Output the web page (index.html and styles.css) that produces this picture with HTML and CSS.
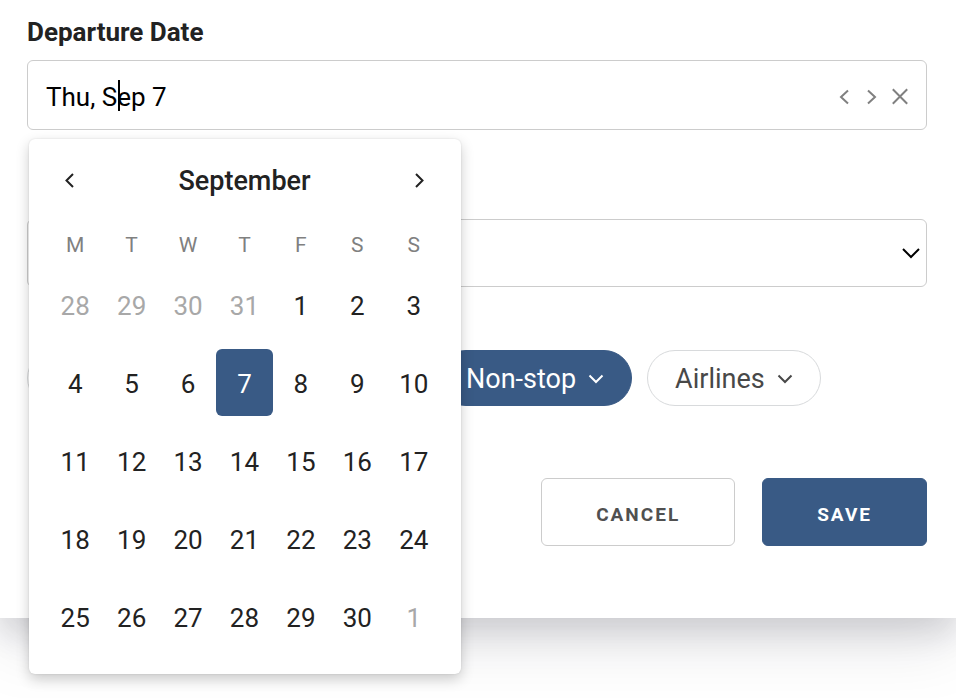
FILE: index.html
```html
<!DOCTYPE html>
<html lang="en">
<head>
<meta charset="utf-8">
<meta name="viewport" content="width=device-width, initial-scale=1">
<title>Departure Date</title>
<link rel="stylesheet" href="styles.css">
</head>
<body>
<form class="card">
  <div class="field">
    <label class="label" for="date">Departure Date</label>
    <div class="control">
      <input class="input" id="date" type="text" value="Thu, Sep 7">
      <span class="caret"></span>
      <div class="tools">
        <button class="tool" type="button" aria-label="Previous day"><svg width="18" height="18" viewBox="0 0 18 18"><path d="M13 2.500 6 9l7 6.500"/></svg></button>
        <button class="tool" type="button" aria-label="Next day"><svg width="18" height="18" viewBox="0 0 18 18"><path d="M5 2.500 12 9l-7 6.500"/></svg></button>
        <button class="tool" type="button" aria-label="Clear"><svg width="18" height="18" viewBox="0 0 18 18"><path d="m1.800 1.300 14.400 14.400M16.200 1.300 1.800 15.700"/></svg></button>
      </div>
      <div class="calendar">
        <div class="month">
          <button class="step" type="button" aria-label="Previous month"><svg width="18" height="18" viewBox="0 0 18 18"><path d="M12 2 5.500 8.500 12 15"/></svg></button>
          <span class="month-name">September</span>
          <button class="step" type="button" aria-label="Next month"><svg width="18" height="18" viewBox="0 0 18 18"><path d="m6 2 6.500 6.500L6 15"/></svg></button>
        </div>
        <table class="days">
          <thead>
            <tr><th>M</th><th>T</th><th>W</th><th>T</th><th>F</th><th>S</th><th>S</th></tr>
          </thead>
          <tbody>
            <tr><td><button type="button" class="day other">28</button></td><td><button type="button" class="day other">29</button></td><td><button type="button" class="day other">30</button></td><td><button type="button" class="day other">31</button></td><td><button type="button" class="day">1</button></td><td><button type="button" class="day">2</button></td><td><button type="button" class="day">3</button></td></tr>
            <tr><td><button type="button" class="day">4</button></td><td><button type="button" class="day">5</button></td><td><button type="button" class="day">6</button></td><td><button type="button" class="day selected">7</button></td><td><button type="button" class="day">8</button></td><td><button type="button" class="day">9</button></td><td><button type="button" class="day">10</button></td></tr>
            <tr><td><button type="button" class="day">11</button></td><td><button type="button" class="day">12</button></td><td><button type="button" class="day">13</button></td><td><button type="button" class="day">14</button></td><td><button type="button" class="day">15</button></td><td><button type="button" class="day">16</button></td><td><button type="button" class="day">17</button></td></tr>
            <tr><td><button type="button" class="day">18</button></td><td><button type="button" class="day">19</button></td><td><button type="button" class="day">20</button></td><td><button type="button" class="day">21</button></td><td><button type="button" class="day">22</button></td><td><button type="button" class="day">23</button></td><td><button type="button" class="day">24</button></td></tr>
            <tr><td><button type="button" class="day">25</button></td><td><button type="button" class="day">26</button></td><td><button type="button" class="day">27</button></td><td><button type="button" class="day">28</button></td><td><button type="button" class="day">29</button></td><td><button type="button" class="day">30</button></td><td><button type="button" class="day other">1</button></td></tr>
          </tbody>
        </table>
      </div>
    </div>
  </div>

  <div class="field">
    <div class="select-box">
      <select class="select" aria-label="Time"><option></option></select>
      <svg class="select-arrow" width="20" height="12" viewBox="0 0 20 12"><path d="m2 2 8 8 8-8"/></svg>
    </div>
  </div>

  <div class="chips">
    <button class="chip chip-wide" type="button" aria-label="Filters"></button>
    <button class="chip chip-on" type="button">Non-stop <svg width="16" height="12" viewBox="0 0 16 12"><path d="m1.500 2.500 6.500 6.500 6.500-6.500"/></svg></button>
    <button class="chip" type="button">Airlines <svg width="16" height="12" viewBox="0 0 16 12"><path d="m1.500 2.500 6.500 6.500 6.500-6.500"/></svg></button>
  </div>

  <div class="actions">
    <button class="action" type="button">CANCEL</button>
    <button class="action action-main" type="submit">SAVE</button>
  </div>
</form>
</body>
</html>
```

FILE: styles.css
```css
* {
  box-sizing: border-box;
}

body {
  margin: 0;
  padding-bottom: 80px;
  background: #fff;
  color: #222;
  font-family: Roboto, "Liberation Sans", sans-serif;
  font-size: 26px;
}

button,
input,
select {
  margin: 0;
  font: inherit;
  color: inherit;
}

button {
  padding: 0;
  border: 0;
  background: none;
}

svg {
  display: block;
  fill: none;
  stroke: currentColor;
  stroke-width: 2;
}

.card {
  padding: 14px 29px 72px 27px;
  background: #fff;
  box-shadow: 0 14px 30px rgba(20, 20, 40, 0.14), 0 28px 60px rgba(20, 20, 40, 0.1);
}

.label {
  display: block;
  margin-bottom: 10px;
  line-height: 36px;
  font-weight: 700;
}

.control {
  position: relative;
  display: flex;
  align-items: center;
  height: 70px;
  padding: 0 17px 0 18px;
  border: 1px solid #ccc;
  border-radius: 6px;
}

.input {
  flex: 1;
  min-width: 0;
  padding: 4px 0 0;
  border: 0;
  outline: 0;
  background: none;
  color: #000;
}

.caret {
  position: absolute;
  left: 90px;
  top: 19px;
  width: 2px;
  height: 31px;
  background: #000;
}

.tools {
  display: flex;
  gap: 10px;
  padding-top: 4px;
  color: #808080;
}

.calendar {
  position: absolute;
  z-index: 1;
  top: 78px;
  left: 1px;
  width: 432px;
  padding: 0 19px 17px 18px;
  border-radius: 6px;
  background: #fff;
  box-shadow: 0 5px 14px rgba(0, 0, 0, 0.2), 0 0 2px rgba(0, 0, 0, 0.12);
}

.month {
  display: flex;
  align-items: center;
  justify-content: space-between;
  height: 83px;
  padding: 0 14px;
}

.month-name {
  font-size: 27px;
  font-weight: 500;
}

.days {
  width: 100%;
  table-layout: fixed;
  border-collapse: collapse;
}

.days th {
  height: 45px;
  padding: 0;
  color: #808080;
  font-size: 21px;
  font-weight: 400;
}

.days td {
  height: 78px;
  padding: 4px 0 7px;
}

.day {
  display: block;
  width: 100%;
  height: 67px;
  padding-top: 2px;
  border-radius: 6px;
}

.other {
  color: #a8a8a8;
}

.selected {
  background: #395a85;
  color: #fff;
}

.select-box {
  position: relative;
  margin-top: 89px;
}

.select {
  display: block;
  width: 100%;
  height: 68px;
  border: 1px solid #ccc;
  border-radius: 6px;
  background: #fff;
  appearance: none;
}

.select-arrow {
  position: absolute;
  top: 28px;
  right: 6px;
  color: #000;
  pointer-events: none;
}

.chips {
  display: flex;
  gap: 15px;
  margin-top: 63px;
}

.chip {
  display: flex;
  align-items: center;
  gap: 12px;
  height: 56px;
  padding: 2px 27px 0;
  border: 1px solid #d8dadc;
  border-radius: 28px;
  background: #fff;
  color: #484848;
  font-size: 27px;
  white-space: nowrap;
}

.chip-wide {
  width: 396px;
}

.chip-on {
  border-color: #395a85;
  background: #395a85;
  color: #fff;
}

.actions {
  display: flex;
  justify-content: flex-end;
  gap: 27px;
  margin-top: 72px;
}

.action {
  height: 68px;
  padding: 4px 54px 0;
  border: 1px solid #ccc;
  border-radius: 6px;
  color: #505050;
  font-size: 19px;
  font-weight: 700;
  letter-spacing: 2px;
}

.action-main {
  border-color: #395a85;
  background: #395a85;
  color: #fff;
}
```
